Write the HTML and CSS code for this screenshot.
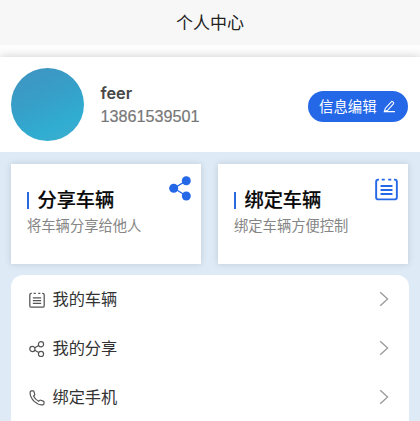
FILE: index.html
```html
<!DOCTYPE html>
<html lang="zh-CN">
<head>
<meta charset="utf-8">
<title>个人中心</title>
<link rel="stylesheet" href="styles.css">
</head>
<body>
<svg class="defs" width="0" height="0" aria-hidden="true">
  <symbol id="note" viewBox="0 0 24 24"><path d="M4.2 2.2H3.5Q1.2 2.2 1.2 4.5V20.5Q1.2 22.8 3.5 22.8H20.5Q22.8 22.8 22.8 20.5V4.5Q22.8 2.2 20.5 2.2H19.8M7 2.2H10.2M13.8 2.2H17M5.8 8.8H18.2M5.8 13H18.2M5.8 17.2H18.2"/></symbol>
  <symbol id="chevron" viewBox="0 0 10 16"><path d="M1.2 1.2L8.6 8L1.2 14.8"/></symbol>
</svg>
<header class="navbar"><h1>个人中心</h1></header>
<main>
  <section class="profile">
    <div class="avatar"></div>
    <div class="identity">
      <div class="name">feer</div>
      <div class="phone">13861539501</div>
    </div>
    <button class="edit">
      <span>信息编辑</span>
      <svg width="13" height="13" viewBox="0 0 13 13"><path d="M1.4 11.4L2.4 8.2L8.3 1.8Q9 1.1 9.8 1.8L10.4 2.4Q11.1 3.1 10.4 3.9L4.6 10.3ZM1.2 11.6H12"/></svg>
    </button>
  </section>
  <section class="cards">
    <article class="card">
      <h2>分享车辆</h2>
      <p>将车辆分享给他人</p>
      <svg class="card-icon share" viewBox="0 0 22 25"><path d="M17.5 4.6L5 12.3L17.5 20"/><circle cx="17.3" cy="4.7" r="4.5"/><circle cx="4.7" cy="12.3" r="4.5"/><circle cx="17.3" cy="20" r="4.5"/></svg>
    </article>
    <article class="card">
      <h2>绑定车辆</h2>
      <p>绑定车辆方便控制</p>
      <svg class="card-icon note"><use href="#note"/></svg>
    </article>
  </section>
  <nav class="menu">
    <a class="row"><svg class="row-icon filled-box"><use href="#note"/></svg><span>我的车辆</span><svg class="chevron"><use href="#chevron"/></svg></a>
    <a class="row"><svg class="row-icon" viewBox="0 0 16 16"><circle cx="3.4" cy="8" r="2.6"/><circle cx="12" cy="3.2" r="2.6"/><circle cx="12" cy="13" r="2.6"/><path d="M5.7 6.8L9.7 4.5M5.7 9.2L9.7 11.6"/></svg><span>我的分享</span><svg class="chevron"><use href="#chevron"/></svg></a>
    <a class="row"><svg class="row-icon" viewBox="0 0 16 16"><path d="M1.3 1.6Q1.7 .9 2.6 .9H4.1Q4.8 .9 5 1.6L5.7 4.1Q5.9 4.8 5.4 5.3L4.5 6.1Q6 9.4 9.6 11.3L10.6 10.4Q11.1 10 11.7 10.2L14.2 11.1Q15 11.4 15 12.1V13.5Q15 14.7 13.9 14.9Q9.4 15.3 5.2 11.4Q.3 6.3 1.3 1.6Z"/></svg><span>绑定手机</span><svg class="chevron"><use href="#chevron"/></svg></a>
  </nav>
</main>
</body>
</html>
```
FILE: styles.css
```css
* { box-sizing: border-box; }
body {
  margin: 0;
  background: #deeaf6;
  font-family: "Liberation Sans", "Noto Sans CJK SC", sans-serif;
}
h1, h2, p { margin: 0; font-weight: 400; }
svg { fill: none; stroke: currentColor; flex: none; }
.defs { position: absolute; }
.navbar {
  height: 45px;
  padding-top: 3px;
  background: #f7f7f7;
  display: flex;
  align-items: center;
  justify-content: center;
}
.navbar h1 { font-size: 17px; line-height: 24px; color: #222; }
main { border-top: 12px solid #fdfdfd; }
.profile {
  height: 95px;
  padding: 0 12px 0 11px;
  display: flex;
  align-items: center;
  background: #fff;
  box-shadow: 0 0 9px rgba(0, 0, 0, .2);
  clip-path: inset(-12px 0 0 0);
}
.avatar {
  width: 73px;
  height: 73px;
  border-radius: 50%;
  background: linear-gradient(155deg, #3f94c1 5%, #36a0c9 45%, #30add2 75%, #41adcb);
}
.identity { margin-left: 16.5px; flex: 1; }
.name { font: 600 16.3px/24px Inter, sans-serif; color: #484848; }
.phone { font-size: 16.2px; line-height: 23px; color: #777; -webkit-text-stroke: .2px #777; }
.edit {
  width: 100px;
  height: 31px;
  margin-top: 3px;
  padding: 0 0 0 11px;
  border: 0;
  border-radius: 16px;
  background: #2468e8;
  color: #fff;
  font: 14.4px/20px "Noto Sans CJK SC", sans-serif;
  display: flex;
  align-items: center;
  gap: 6px;
}
.edit svg { stroke-width: 1.1; }
.cards {
  display: grid;
  grid-template-columns: 190px 190px;
  gap: 17px;
  padding: 12px 11px 11px;
}
.card {
  position: relative;
  height: 100px;
  padding: 24px 16px 0;
  background: #fff;
  box-shadow: 0 0 6px rgba(80, 90, 110, .22);
}
.card h2 {
  display: flex;
  align-items: center;
  gap: 8.5px;
  font-size: 19.2px;
  font-weight: 500;
  line-height: 25px;
  color: #080808;
  -webkit-text-stroke: .2px #080808;
}
.card h2::before { content: ""; width: 2px; height: 17px; background: #2869df; }
.card p { margin-top: 3px; font-size: 14.3px; line-height: 21px; color: #858585; }
.card-icon { position: absolute; color: #2468e8; }
.share { top: 12px; right: 10.5px; width: 22px; height: 25px; fill: #2468e8; stroke-width: 1.3; }
.share path { fill: none; }
.share circle { stroke: none; }
.note { top: 13px; right: 10px; width: 23px; height: 24px; stroke-width: 2; }
.menu {
  width: 398px;
  height: 146px;
  margin-left: 11px;
  border-radius: 12px 12px 0 0;
  background: #fff;
}
.row {
  height: 49px;
  padding: 0 20px 0 18px;
  display: flex;
  align-items: center;
  color: #333;
  font-size: 16.2px;
}
.row:last-child { height: 49px; }
.row-icon { width: 16px; height: 16px; margin-right: 7.5px; color: #555; stroke-width: 1.2; }
.filled-box { stroke-width: 1.9; }
.row span { flex: 1; line-height: 24px; padding-bottom: 2px; }
.chevron { width: 10px; height: 16px; margin-bottom: 1px; color: #999; stroke-width: 1.3; }
```
